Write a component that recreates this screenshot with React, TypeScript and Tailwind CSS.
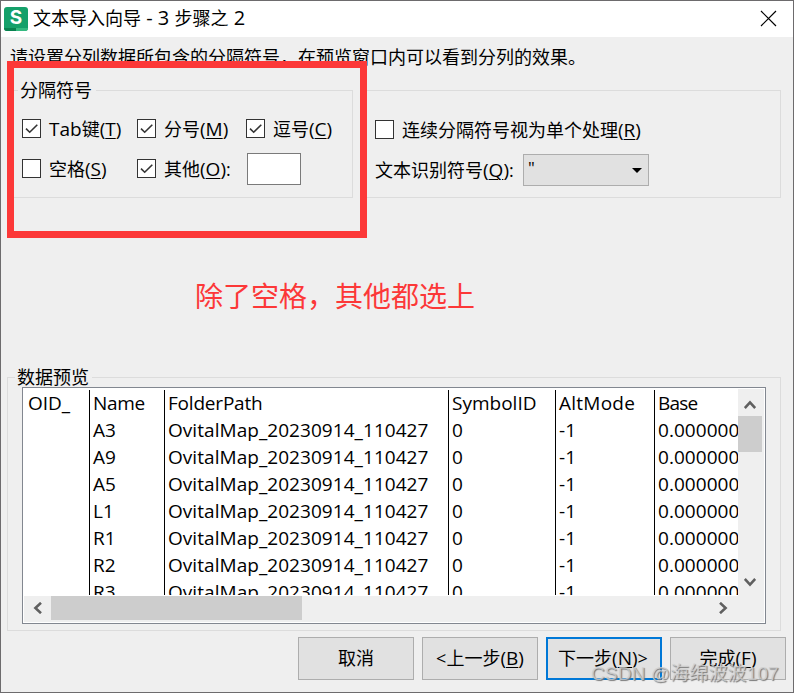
import React from 'react';

const SANS = "font-['Open_Sans','Noto_Sans_CJK_SC',sans-serif]";

function Check({ checked = false }: { checked?: boolean }) {
  return (
    <span className="block h-[19px] w-[19px] shrink-0 border border-[#333] bg-white">
      {checked && (
        <svg width="17" height="17" viewBox="0 0 17 17" fill="none" stroke="#333" strokeWidth="1.6">
          <path d="M3 8.6 6.7 12.2 14.3 4.7" />
        </svg>
      )}
    </span>
  );
}

function Key({ k }: { k: string }) {
  return (
    <span className="text-[19px]">
      (<span className="underline decoration-1 underline-offset-2">{k}</span>)
    </span>
  );
}

function Option({ label, k, checked, suffix = '', className = '' }: { label: React.ReactNode; k: string; checked?: boolean; suffix?: string; className?: string }) {
  return (
    <div className={`flex h-[19px] items-center gap-2 whitespace-nowrap ${className}`}>
      <Check checked={checked} />
      <span>
        {label}
        <Key k={k} />
        {suffix}
      </span>
    </div>
  );
}

function Arrow({ className = '' }: { className?: string }) {
  return (
    <svg className={className} width="12" height="12" viewBox="0 0 12 12" fill="none" stroke="#606060" strokeWidth="2.6">
      <path d="M0.8 9 6 3.4 11.2 9" />
    </svg>
  );
}

const columns = [
  { head: 'OID_', cell: () => '', cls: 'w-[65px] border-r pl-[3px]', headCls: '' },
  { head: 'Name', cell: (n: string) => n, cls: 'w-[75px] border-r pl-[3px]', headCls: 'tracking-[-0.3px]' },
  { head: 'FolderPath', cell: () => 'OvitalMap_20230914_110427', cls: 'w-[284px] border-r pl-[3px]', headCls: 'tracking-[-0.2px]' },
  { head: 'SymbolID', cell: () => '0', cls: 'w-[107px] border-r pl-[3px]', headCls: '' },
  { head: 'AltMode', cell: () => '-1', cls: 'w-[99px] border-r pl-[3px]', headCls: 'tracking-[0.25px]' },
  { head: 'Base', cell: () => '0.000000', cls: 'w-[83px] pl-[3px]', headCls: 'tracking-[-0.8px]' },
];
const names = ['A3', 'A9', 'A5', 'L1', 'R1', 'R2', 'R3'];

function Preview() {
  return (
    <div className="ml-[14px] mt-[9px] h-[237px] w-[744px] border border-[#828790] bg-white p-px">
      <div className="flex h-[207px]">
        <div className="flex h-[206px] w-[714px] overflow-hidden bg-white pl-px pt-px text-[19px] leading-[27px]">
          {columns.map((c) => (
            <div key={c.head} className={`h-[205px] shrink-0 overflow-hidden whitespace-nowrap border-black ${c.cls}`}>
              <div className={c.headCls}>{c.head}</div>
              {names.map((n) => (
                <div key={n} className="h-[27px] tracking-[0.05px]">{c.cell(n)}</div>
              ))}
            </div>
          ))}
        </div>
        <div className="flex w-[26px] flex-col bg-[#efefef]">
          <div className="flex h-[27px] w-6 items-center justify-center pt-[4px]"><Arrow /></div>
          <div className="h-9 w-6 bg-[#cdcdcd]" />
          <div className="flex flex-1 w-6 items-end justify-center pb-[8px]"><Arrow className="rotate-180" /></div>
        </div>
      </div>
      <div className="flex h-[26px] bg-[#efefef]">
        <div className="flex h-6 w-[27px] items-center justify-center"><Arrow className="-rotate-90" /></div>
        <div className="h-6 w-[251px] bg-[#cdcdcd]" />
        <div className="flex h-6 w-[436px] items-center justify-end pr-[9px]"><Arrow className="rotate-90" /></div>
      </div>
    </div>
  );
}

function Btn({ children, primary = false }: { children: React.ReactNode; primary?: boolean }) {
  return (
    <button className={`h-[43px] w-[116px] whitespace-nowrap bg-[#e1e1e1] pb-0.5 ${primary ? 'border-2 border-[#0078d7] pr-[2px]' : 'border border-[#adadad]'}`}>
      {children}
    </button>
  );
}

export default function App() {
  return (
    <div className={`relative h-[693px] w-[794px] overflow-hidden border border-[#6d6b6d] bg-[#efefef] text-[18px] leading-[24px] text-black ${SANS}`}>
      <header className="flex h-9 items-center bg-white pl-[3px]">
        <span className="relative mr-[5px] flex h-6 w-6 items-center justify-center overflow-hidden rounded-[3px] bg-[#15a06a] font-['Inter',sans-serif] text-[19px] font-bold leading-none text-white">
          <span className="absolute bottom-0 left-0 h-[3px] w-3 bg-[#08814f]" />
          <span className="absolute bottom-0 right-0 h-[3px] w-3 bg-[#35b980]" />
          <span className="relative -top-[2px]">S</span>
        </span>
        <h1 className="-mt-[2px]">文本导入向导<span className="text-[20px]"> - 3 </span>步骤之<span className="text-[20px]"> 2</span></h1>
        <svg className="mb-[2px] ml-auto mr-4" width="17" height="17" viewBox="0 0 17 17" stroke="#000" strokeWidth="1.2">
          <path d="M1 1 16 16M16 1 1 16" />
        </svg>
      </header>

      <p className="h-[53px] whitespace-nowrap pl-[9px] pt-[8px]">请设置分列数据所包含的分隔符号，在预览窗口内可以看到分列的效果。</p>

      <div className="flex h-[108px] gap-2 pl-[6px]">
        <section className="w-[346px] border border-[#dcdcdc] pl-[14px]">
          <div className="-mt-[13px] h-6"><span className="-ml-[4px] bg-[#efefef] pl-[2px] pr-[4px]">分隔符号</span></div>
          <div className="mt-[17px] flex">
            <Option label={<><span className="text-[19px]">Tab</span>键</>} k="T" checked className="w-[115px]" />
            <Option label="分号" k="M" checked className="w-[109px]" />
            <Option label="逗号" k="C" checked />
          </div>
          <div className="mt-[15px] flex items-start">
            <Option label="空格" k="S" className="mt-[6px] w-[115px]" />
            <Option label="其他" k="O" checked suffix=":" className="mt-[6px] w-[110px]" />
            <input className="h-8 w-[54px] border border-[#7a7a7a] bg-white" />
          </div>
        </section>
        <section className="w-[420px] border border-[#dcdcdc] pl-[13px] pt-[29px]">
          <Option label="连续分隔符号视为单个处理" k="R" />
          <div className="mt-[15px] flex h-8 items-center whitespace-nowrap">
            <span className="w-[148px]">文本识别符号<Key k="Q" />:</span>
            <div className="flex h-8 w-[126px] items-center justify-between border border-[#adadad] bg-[#e1e1e1] pl-1 pr-[6px]">
              <span className="mb-1 text-[17px]">"</span>
              <svg width="10" height="5" viewBox="0 0 10 5"><path d="M0 0h10L5 5z" /></svg>
            </div>
          </div>
        </section>
      </div>

      <p className="ml-[194px] mt-[78px] h-10 whitespace-nowrap text-[28px] leading-10 text-[#fc3838]">除了空格，其他都选上</p>

      <section className="ml-[6px] mt-[61px] h-[254px] w-[774px] border border-[#dcdcdc]">
        <div className="-mt-[13px] -mb-[10px] h-[23px] pl-[7px]"><span className="inline-block h-[20px] bg-[#efefef] pl-[2px] pr-[3px]">数据预览</span></div>
        <Preview />
      </section>

      <footer className="mt-[6px] flex gap-2 pl-[297px]">
        <Btn>取消</Btn>
        <Btn>&lt;上一步<Key k="B" /></Btn>
        <Btn primary>下一步<Key k="N" />&gt;</Btn>
        <Btn>完成<Key k="F" /></Btn>
      </footer>

      <div className="absolute left-[6px] top-[60px] h-[177px] w-[360px] border-[7px] border-[#fc3838]" />
      <div className="absolute left-[590px] top-[661px] whitespace-nowrap font-['Liberation_Sans','Noto_Sans_CJK_SC',sans-serif] text-[19px] leading-6 tracking-[0.13px] text-[#d0d0d0]/80 [text-shadow:1px_1px_1px_#777]">CSDN @海绵波波107</div>
    </div>
  );
}
